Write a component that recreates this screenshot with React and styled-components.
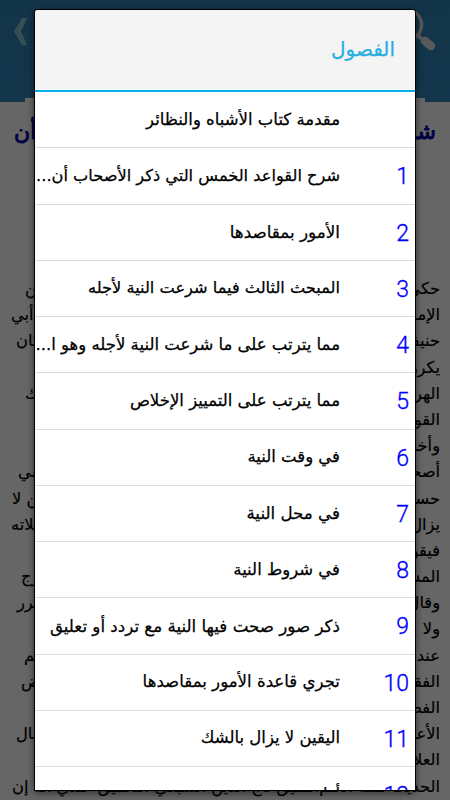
import React from 'react'
import styled, { createGlobalStyle } from 'styled-components'

const chapters = [
  { title: 'مقدمة كتاب الأشباه والنظائر' },
  { id: 1, title: 'شرح القواعد الخمس التي ذكر الأصحاب أن...', size: 16.2 },
  { id: 2, title: 'الأمور بمقاصدها', size: 16.8 },
  { id: 3, title: 'المبحث الثالث فيما شرعت النية لأجله', size: 16.2 },
  { id: 4, title: 'مما يترتب على ما شرعت النية لأجله وهو ا...' },
  { id: 5, title: 'مما يترتب على التمييز الإخلاص' },
  { id: 6, title: 'في وقت النية' },
  { id: 7, title: 'في محل النية', size: 16.7 },
  { id: 8, title: 'في شروط النية' },
  { id: 9, title: 'ذكر صور صحت فيها النية مع تردد أو تعليق', size: 16.7 },
  { id: 10, title: 'تجري قاعدة الأمور بمقاصدها', size: 16.6 },
  { id: 11, title: 'اليقين لا يزال بالشك' },
  { id: 12, title: 'أول' },
]

// first words, last words and left gap of every line of the page
const lines = [
  { start: 'حكى', end: 'من', gap: 25 },
  { start: 'الإمام', end: 'أبي', gap: 11 },
  { start: 'حنيفة', end: 'كان', gap: 16 },
  { start: 'يكرر' },
  { start: 'الهروي', end: 'ذلك', gap: 25 },
  { start: 'القول' },
  { start: 'وأخر' },
  { start: 'أصحاب', end: 'القاضي', gap: 18 },
  { start: 'حسين', end: 'من لا', gap: 12 },
  { start: 'يزال', end: 'صلاته', gap: 11 },
  { start: 'فيقول' },
  { start: 'المشقة', end: 'الحرج', gap: 21 },
  { start: 'وقال', end: 'الضرر', gap: 17 },
  { start: 'ولا' },
  { start: 'عند', end: 'ثم', gap: 24 },
  { start: 'الفقه', end: 'بعض', gap: 21 },
  { start: 'الفضل' },
  { start: 'الأعمال', end: 'قال', gap: 16 },
  { start: 'العلامة' },
  { start: 'الحديث مثله العلم', end: 'المليق تاج الدين السبكي التحقيق عندي أنه إن', gap: 15 },
]

function App() {
  return (
    <Screen>
      <GlobalStyle />
      <TopBar>
        <Search viewBox="0 0 60 60">
          <circle cx="22" cy="15" r="15.5" fill="none" stroke="#d9dee0" strokeWidth="3.5" />
          <path d="M41 31 L47 36" stroke="#d9dee0" strokeWidth="8.5" strokeLinecap="round" />
          <path d="M32 24 L38 29" stroke="#d9dee0" strokeWidth="4" />
        </Search>
        <Back viewBox="0 0 14 27">
          <path d="M8 0 H13 L7 13.5 L13 27 H8 L0 13.5 Z" fill="#8ac4cf" />
        </Back>
      </TopBar>
      <Page>
        <PageTitle><span>شرح</span><span>أن</span></PageTitle>
        {lines.map((line, key) => (
          <Line key={key} $gap={line.gap}>
            <span>{line.start}</span>
            <span>{line.end}</span>
          </Line>
        ))}
      </Page>
      <Overlay>
        <Dialog>
          <DialogHead>الفصول</DialogHead>
          <List>
            {chapters.map((item, key) => (
              <Row key={key}>
                <Num>{item.id}</Num>
                <Title $size={item.size}>{item.title}</Title>
              </Row>
            ))}
          </List>
        </Dialog>
      </Overlay>
    </Screen>
  )
}

const GlobalStyle = createGlobalStyle`
  * {
    box-sizing: border-box;
  }
  body {
    margin: 0;
    overflow: hidden;
  }
`
const Screen = styled.div`
  position: relative;
  width: 450px;
  height: 800px;
  overflow: hidden;
  direction: rtl;
  background: #fff;
  font-family: 'DejaVu Sans', sans-serif;
`
const TopBar = styled.div`
  display: flex;
  justify-content: space-between;
  height: 102px;
  padding: 10px 12px 0 14px;
  background: linear-gradient(#2d83b8, #3087bd);
`
const Search = styled.svg`
  width: 60px;
  height: 60px;
  margin-right: -6px;
`
const Back = styled.svg`
  width: 14px;
  height: 27px;
  margin-top: 8px;
`
const Page = styled.div`
  height: 702px;
  margin-top: -4px;
`
const PageTitle = styled.div`
  display: flex;
  justify-content: space-between;
  width: 400px;
  height: 178px;
  margin: 0 auto;
  padding-top: 17px;
  background: #fff;
  color: #0000a8;
  font-size: 22px;
  line-height: 34px;
  -webkit-text-stroke: 0.9px #0000a8;
  span {
    margin: 0 -11px;
  }
`
const Line = styled.div`
  display: flex;
  justify-content: space-between;
  height: 26.2px;
  padding: 0 10px 0 ${(props) => props.$gap || 10}px;
  font-size: 16.3px;
  line-height: 26px;
  white-space: nowrap;
  -webkit-text-stroke: 0.2px #000;
`
const Overlay = styled.div`
  position: absolute;
  inset: 0;
  padding: 10px 35px;
  background: rgba(0, 0, 0, 0.6);
`
const Dialog = styled.div`
  display: flex;
  flex-direction: column;
  height: 780px;
  overflow: hidden;
  border-radius: 3px 3px 0 0;
  background: #fff;
  box-shadow: 0 0 0 1px #000, 0 2px 7px 1px rgba(0, 0, 0, 0.55);
`
const DialogHead = styled.div`
  flex: none;
  height: 82px;
  padding: 0 20px;
  border-bottom: 2px solid #00b0e6;
  background: #f4f4f4;
  color: #27aee2;
  font-size: 20px;
  line-height: 79px;
  -webkit-text-stroke: 0.25px #27aee2;
`
const List = styled.div`
  flex: 1;
  overflow: hidden;
`
const Row = styled.div`
  display: flex;
  align-items: center;
  height: 56.25px;
  border-bottom: 1px solid #dcdcdc;
`
const Num = styled.div`
  flex: none;
  width: 75px;
  padding: 3px 6px 0 0;
  color: #0000ff;
  font-family: Roboto, sans-serif;
  font-size: 23px;
  font-weight: 300;
  line-height: 30px;
  -webkit-text-stroke: 0.35px #0000ff;
`
const Title = styled.div`
  flex: 1;
  color: #000;
  font-size: ${(props) => props.$size || 16.5}px;
  line-height: 24px;
  white-space: nowrap;
  -webkit-text-stroke: 0.25px #000;
`
export default App
